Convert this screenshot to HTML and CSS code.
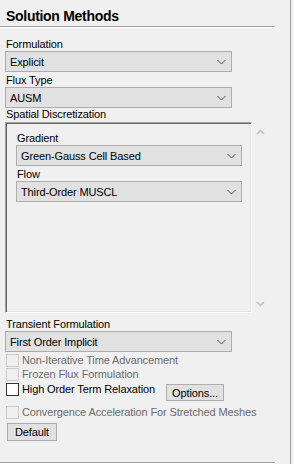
FILE: index.html
```html
<!DOCTYPE html>
<html lang="en">
<head>
  <meta charset="UTF-8">
  <title>Solution Methods</title>
  <link rel="stylesheet" href="styles.css">
</head>
<body>
<div class="window">
  <div class="panel">
    <div class="title">Solution Methods</div>

    <div class="content">
      <div class="label">Formulation</div>
      <div class="select wide">
        <span>Explicit</span>
        <svg width="9" height="6" viewBox="0 0 9 6"><path d="M0.5 1 L4.5 5 L8.5 1" fill="none" stroke="#555" stroke-width="1"/></svg>
      </div>

      <div class="label">Flux Type</div>
      <div class="select wide">
        <span>AUSM</span>
        <svg width="9" height="6" viewBox="0 0 9 6"><path d="M0.5 1 L4.5 5 L8.5 1" fill="none" stroke="#555" stroke-width="1"/></svg>
      </div>

      <div class="label tight">Spatial Discretization</div>
      <div class="group-row">
        <div class="group">
          <div class="label">Gradient</div>
          <div class="select">
            <span>Green-Gauss Cell Based</span>
            <svg width="9" height="6" viewBox="0 0 9 6"><path d="M0.5 1 L4.5 5 L8.5 1" fill="none" stroke="#555" stroke-width="1"/></svg>
          </div>
          <div class="label">Flow</div>
          <div class="select">
            <span>Third-Order MUSCL</span>
            <svg width="9" height="6" viewBox="0 0 9 6"><path d="M0.5 1 L4.5 5 L8.5 1" fill="none" stroke="#555" stroke-width="1"/></svg>
          </div>
        </div>
        <div class="scroll">
          <svg width="9" height="6" viewBox="0 0 9 6"><path d="M1 5 L4.5 1.5 L8 5" fill="none" stroke="#c2c2c2" stroke-width="1.6"/></svg>
          <svg width="9" height="6" viewBox="0 0 9 6"><path d="M1 1 L4.5 4.5 L8 1" fill="none" stroke="#c2c2c2" stroke-width="1.6"/></svg>
        </div>
      </div>

      <div class="label after-group">Transient Formulation</div>
      <div class="select wide">
        <span>First Order Implicit</span>
        <svg width="9" height="6" viewBox="0 0 9 6"><path d="M0.5 1 L4.5 5 L8.5 1" fill="none" stroke="#555" stroke-width="1"/></svg>
      </div>

      <div class="check disabled first"><span class="box"></span>Non-Iterative Time Advancement</div>
      <div class="check disabled"><span class="box"></span>Frozen Flux Formulation</div>
      <div class="check-row">
        <div class="check"><span class="box"></span>High Order Term Relaxation</div>
        <div class="button options">Options...</div>
      </div>
      <div class="check disabled"><span class="box"></span>Convergence Acceleration For Stretched Meshes</div>

      <div class="button default">Default</div>
    </div>
  </div>
</div>
</body>
</html>
```

FILE: styles.css
```css
body {
  margin: 0;
  background: #f0f0f0;
  font-family: "Liberation Sans", Arial, sans-serif;
  font-size: 11px;
  letter-spacing: -0.12px;
  color: #000;
}

.window {
  width: 290px;
  height: 464px;
  border-right: 1px solid #a0a0a0;
}

.panel {
  width: 275px;
  height: 462px;
  border-bottom: 1px solid #a0a0a0;
  box-shadow: 0 1px 0 #fff;
}

.title {
  box-sizing: border-box;
  height: 27px;
  border-bottom: 1px solid #a0a0a0;
  box-shadow: 0 1px 0 #fff;
  padding: 8px 0 0 6px;
  font-size: 14px;
  font-weight: bold;
  letter-spacing: -0.3px;
  line-height: 16px;
}

.content {
  padding: 9px 0 0 5px;
}

.label {
  padding: 2px 0 0 1px;
  line-height: 13px;
}

.label.tight {
  padding-top: 0;
}

.label.after-group {
  padding-top: 5px;
}

.select {
  width: 227px;
  height: 21px;
  box-sizing: border-box;
  border: 1px solid #adadad;
  background: #e1e1e1;
  display: flex;
  align-items: center;
  justify-content: space-between;
  padding: 0 5px 0 4px;
}

.group .select {
  width: 226px;
}

.group-row {
  display: flex;
  margin-top: 1px;
}

.group {
  width: 247px;
  height: 191px;
  box-sizing: border-box;
  border: 1px solid;
  border-color: #a0a0a0 #fff #fff #a0a0a0;
  box-shadow: inset 1px 1px 0 #696969, inset -1px -1px 0 #e3e3e3;
  padding: 7px 0 0 10px;
}

.scroll {
  width: 17px;
  height: 191px;
  box-sizing: border-box;
  display: flex;
  flex-direction: column;
  justify-content: space-between;
  align-items: center;
  padding: 7px 0 6px 0;
}

.check {
  display: flex;
  align-items: center;
  height: 14px;
  margin-left: 1px;
}

.check.first {
  margin-top: 1px;
}

.check .box {
  width: 13px;
  height: 13px;
  box-sizing: border-box;
  border: 1px solid #333;
  background: #fff;
  margin-right: 3px;
}

.check.disabled {
  color: #6d6d6d;
}

.check.disabled .box {
  border-color: #cccccc;
  background: #f0f0f0;
}

.check-row {
  display: flex;
  align-items: flex-start;
  height: 24px;
}

.check-row .check {
  margin-top: 1px;
}

.button {
  height: 18px;
  box-sizing: border-box;
  border: 1px solid #adadad;
  background: #e1e1e1;
  display: flex;
  align-items: center;
  justify-content: center;
}

.options {
  width: 58px;
  height: 17px;
  margin: 3px 0 0 11px;
}

.default {
  width: 50px;
  margin: 4px 0 0 2px;
}
```
